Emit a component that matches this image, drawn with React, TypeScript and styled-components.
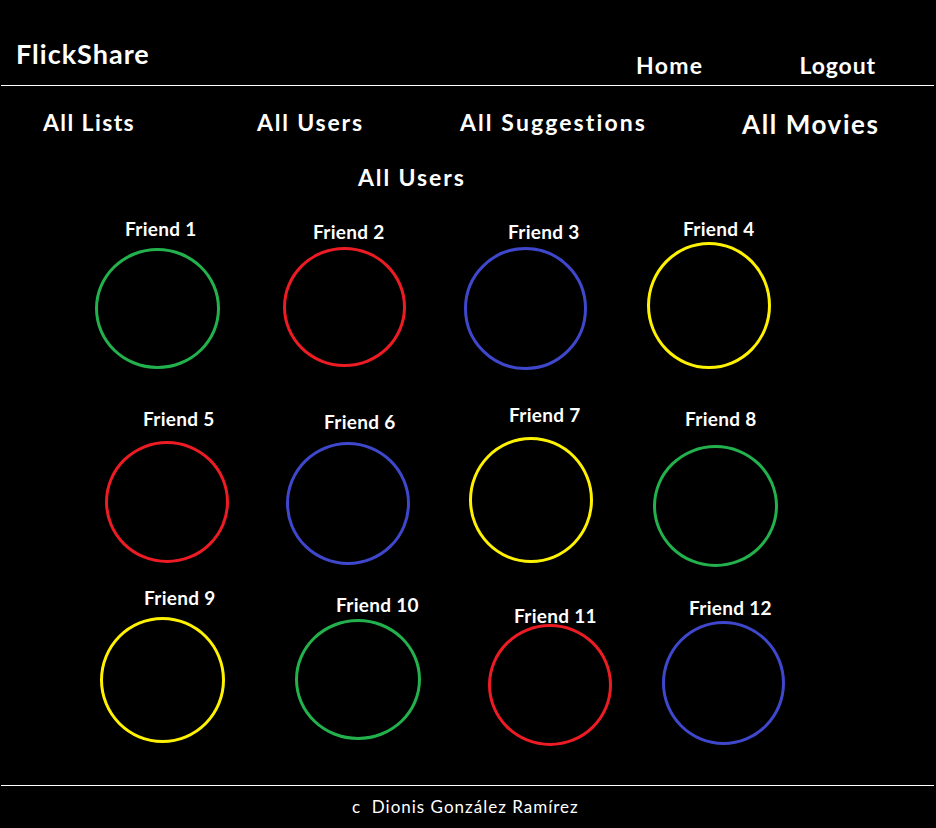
import React from "react";
import styled, { createGlobalStyle } from "styled-components";

const Global = createGlobalStyle`
  html, body { margin: 0; padding: 0; background: #000; }
  body { font-family: "Lato", "Open Sans", sans-serif; color: #fff; }
  * { box-sizing: border-box; }
`;

const Page = styled.div`
  width: 936px;
  min-height: 828px;
  background: #000;
  display: flex;
  flex-direction: column;
`;

const Header = styled.header`
  height: 86px;
  display: flex;
  align-items: flex-start;
  padding-left: 16px;
  margin-right: 2px;
  margin-left: 1px;
  border-bottom: 1px solid #fff;
`;

const Logo = styled.div`
  margin-top: 40px;
  margin-left: -1px;
  font-weight: 700;
  font-size: 27px;
  letter-spacing: 1px;
  line-height: 1;
`;

const TopLinks = styled.nav`
  margin-left: auto;
  margin-right: 58px;
  margin-top: 54px;
  display: flex;
  gap: 96px;
`;

const TopLink = styled.span<{ $spacing: number }>`
  font-weight: 700;
  font-size: 23px;
  letter-spacing: ${(p) => p.$spacing}px;
  line-height: 1;
`;

const NavRow = styled.nav`
  margin-top: 25px;
  padding-left: 43px;
  display: grid;
  grid-template-columns: 214px 203px 282px auto;
  align-items: start;
`;

const NavItem = styled.span<{ $size: number; $spacing: number }>`
  font-weight: 700;
  font-size: ${(p) => p.$size}px;
  letter-spacing: ${(p) => p.$spacing}px;
  line-height: 1;
`;

const Heading = styled.h2`
  margin: 29px 0 0;
  padding-left: 358px;
  font-weight: 700;
  font-size: 23px;
  letter-spacing: 1.9px;
  line-height: 1;
`;

const FriendGrid = styled.section`
  margin-top: 15px;
  padding-left: 90px;
  display: grid;
  grid-template-columns: repeat(4, 180px);
  grid-template-rows: 188px 182px 211px;
`;

const Friend = styled.div`
  display: flex;
  flex-direction: column;
  align-items: flex-start;
`;

const Label = styled.span<{ $x: number; $y: number }>`
  margin-left: ${(p) => p.$x}px;
  margin-top: ${(p) => p.$y}px;
  font-weight: 700;
  font-size: 19px;
  letter-spacing: 0.3px;
  line-height: 1;
  white-space: nowrap;
`;

const Ring = styled.div<{ $x: number; $y: number; $w: number; $h: number; $color: string }>`
  margin-left: ${(p) => p.$x}px;
  margin-top: ${(p) => p.$y}px;
  width: ${(p) => p.$w}px;
  height: ${(p) => p.$h}px;
  border: 3px solid ${(p) => p.$color};
  border-radius: 50%;
`;

const Footer = styled.footer`
  margin-left: 1px;
  margin-right: 2px;
  border-top: 1px solid #fff;
  padding-top: 12px;
  padding-left: 351px;
  font-size: 17px;
  letter-spacing: 1px;
  line-height: 1;
`;

const GREEN = "#22b14c";
const RED = "#ed1c24";
const BLUE = "#3f48cc";
const YELLOW = "#fff200";

type F = { name: string; lx: number; ly: number; rx: number; ry: number; w: number; h: number; c: string };

const friends: F[] = [
  { name: "Friend 1", lx: 35, ly: 15, rx: 5, ry: 10, w: 125, h: 121, c: GREEN },
  { name: "Friend 2", lx: 43, ly: 18, rx: 13, ry: 6, w: 123, h: 120, c: RED },
  { name: "Friend 3", lx: 58, ly: 18, rx: 14, ry: 6, w: 123, h: 123, c: BLUE },
  { name: "Friend 4", lx: 53, ly: 15, rx: 17, ry: 4, w: 124, h: 127, c: YELLOW },
  { name: "Friend 5", lx: 53, ly: 17, rx: 15, ry: 13, w: 124, h: 122, c: RED },
  { name: "Friend 6", lx: 54, ly: 20, rx: 16, ry: 11, w: 124, h: 123, c: BLUE },
  { name: "Friend 7", lx: 59, ly: 13, rx: 19, ry: 13, w: 124, h: 126, c: YELLOW },
  { name: "Friend 8", lx: 55, ly: 17, rx: 23, ry: 17, w: 125, h: 122, c: GREEN },
  { name: "Friend 9", lx: 54, ly: 14, rx: 10, ry: 10, w: 125, h: 126, c: YELLOW },
  { name: "Friend 10", lx: 66, ly: 21, rx: 25, ry: 5, w: 126, h: 121, c: GREEN },
  { name: "Friend 11", lx: 64, ly: 32, rx: 38, ry: -1, w: 124, h: 122, c: RED },
  { name: "Friend 12", lx: 59, ly: 24, rx: 32, ry: 4, w: 123, h: 124, c: BLUE },
];

const navItems = [
  { label: "All Lists", size: 23, spacing: 1.4 },
  { label: "All Users", size: 23, spacing: 1.8 },
  { label: "All Suggestions", size: 23, spacing: 2.1 },
  { label: "All Movies", size: 26, spacing: 1.6 },
];

export default function App() {
  return (
    <Page>
      <Global />
      <Header>
        <Logo>FlickShare</Logo>
        <TopLinks>
          <TopLink $spacing={1.3}>Home</TopLink>
          <TopLink $spacing={0.9}>Logout</TopLink>
        </TopLinks>
      </Header>
      <NavRow>
        {navItems.map((n) => (
          <NavItem key={n.label} $size={n.size} $spacing={n.spacing}>
            {n.label}
          </NavItem>
        ))}
      </NavRow>
      <Heading>All Users</Heading>
      <FriendGrid>
        {friends.map((f) => (
          <Friend key={f.name}>
            <Label $x={f.lx} $y={f.ly}>{f.name}</Label>
            <Ring $x={f.rx} $y={f.ry} $w={f.w} $h={f.h} $color={f.c} />
          </Friend>
        ))}
      </FriendGrid>
      <Footer>c&nbsp;&nbsp;Dionis González Ramírez</Footer>
    </Page>
  );
}
